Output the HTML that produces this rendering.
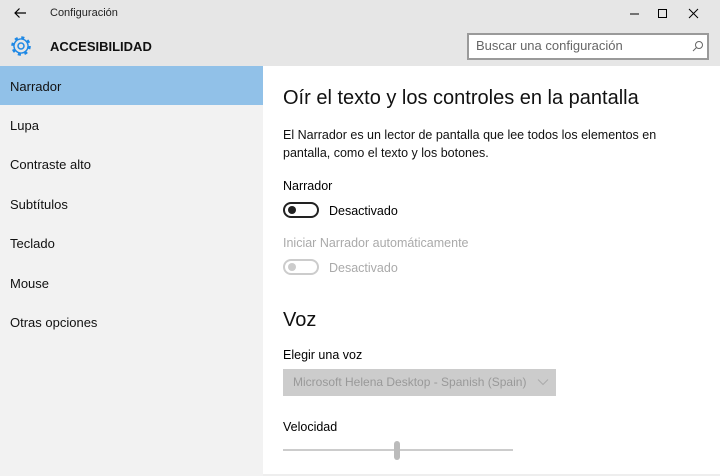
<!DOCTYPE html>
<html><head><meta charset="utf-8"><style>
*{margin:0;padding:0;box-sizing:border-box}
body{width:720px;height:476px;overflow:hidden;font-family:"Liberation Sans",sans-serif;background:#fff;position:relative;color:#000}
.hdr{position:absolute;left:0;top:0;width:720px;height:66px;background:#e6e6e6}
.side{position:absolute;left:0;top:66px;width:263px;height:410px;background:#f2f2f2}
.item{position:absolute;left:10px;font-size:13px;color:#111}
.sel{position:absolute;left:0;top:66px;width:263px;height:39px;background:#91c1e8}
.t{position:absolute;white-space:nowrap}
.tog{position:absolute;width:36px;height:16px;border:2px solid #222;border-radius:8px}
.tog i{position:absolute;left:3px;top:2px;width:8px;height:8px;border-radius:50%;background:#222}
</style></head><body>
<div class="hdr"></div>
<div class="side"></div>
<div class="sel"></div>
<svg class="t" style="left:13px;top:7px" width="14" height="12" viewBox="0 0 14 12"><path d="M13 6H2M6.5 1.5L2 6l4.5 4.5" fill="none" stroke="#000" stroke-width="1.2"/></svg>
<div class="t" style="left:50px;top:7px;font-size:11px;color:#222">Configuración</div>
<svg class="t" style="left:630px;top:8px" width="80" height="12"><path d="M0 6h9" stroke="#000"/><rect x="28.5" y="1.5" width="8" height="8" fill="none" stroke="#000"/><path d="M59 1l9 9M68 1l-9 9" stroke="#000"/></svg>
<svg class="t" style="left:10px;top:35px" width="22" height="22" viewBox="0 0 22 22"><circle cx="11" cy="11" r="7" fill="none" stroke="#1e88e5" stroke-width="1.5"/><circle cx="11" cy="11" r="8.3" fill="none" stroke="#1e88e5" stroke-width="3" stroke-dasharray="3 3.52"/><circle cx="11" cy="11" r="6.2" fill="#e6e6e6"/><circle cx="11" cy="11" r="3" fill="none" stroke="#1e88e5" stroke-width="1.5"/></svg>
<div class="t" style="left:50px;top:39px;font-size:13px;font-weight:bold;color:#111">ACCESIBILIDAD</div>
<div class="t" style="left:467px;top:33px;width:242px;height:27px;border:2px solid #9a9a9a;background:#fff"></div>
<div class="t" style="left:476px;top:38px;font-size:13px;color:#666">Buscar una configuración</div>
<svg class="t" style="left:692px;top:40px" width="12" height="12"><circle cx="7" cy="5" r="3.5" fill="none" stroke="#666"/><path d="M4.5 7.5L1 11" stroke="#666"/></svg>
<div class="item" style="top:79px">Narrador</div>
<div class="item" style="top:118px">Lupa</div>
<div class="item" style="top:157px">Contraste alto</div>
<div class="item" style="top:197px">Subtítulos</div>
<div class="item" style="top:236px">Teclado</div>
<div class="item" style="top:276px">Mouse</div>
<div class="item" style="top:315px">Otras opciones</div>
<div class="t" style="left:283px;top:87px;font-size:20px;color:#111">Oír el texto y los controles en la pantalla</div>
<div class="t" style="left:283px;top:126px;font-size:12.5px;line-height:18px;color:#111">El Narrador es un lector de pantalla que lee todos los elementos en<br>pantalla, como el texto y los botones.</div>
<div class="t" style="left:283px;top:179px;font-size:12.5px">Narrador</div>
<div class="tog" style="left:283px;top:202px"><i></i></div>
<div class="t" style="left:329px;top:204px;font-size:12.5px">Desactivado</div>
<div class="t" style="left:283px;top:236px;font-size:12.5px;color:#aaa">Iniciar Narrador automáticamente</div>
<div class="tog" style="left:283px;top:259px;border-color:#ccc"><i style="background:#ccc"></i></div>
<div class="t" style="left:329px;top:261px;font-size:12.5px;color:#aaa">Desactivado</div>
<div class="t" style="left:283px;top:309px;font-size:20px;color:#111">Voz</div>
<div class="t" style="left:283px;top:348px;font-size:12.5px">Elegir una voz</div>
<div class="t" style="left:283px;top:369px;width:273px;height:27px;background:#cccccc"></div>
<div class="t" style="left:293px;top:375px;font-size:12px;color:#999">Microsoft Helena Desktop - Spanish (Spain)</div>
<svg class="t" style="left:537px;top:378px" width="12" height="8"><path d="M1 1.5l5 5 5-5" fill="none" stroke="#aaa"/></svg>
<div class="t" style="left:283px;top:420px;font-size:12.5px">Velocidad</div>
<div class="t" style="left:283px;top:449px;width:230px;height:2px;background:#ccc"></div>
<div class="t" style="left:394px;top:441px;width:6px;height:19px;border-radius:3px;background:#bbb"></div>
<div class="t" style="left:263px;top:474px;width:457px;height:2px;background:#eee"></div>
</body></html>
